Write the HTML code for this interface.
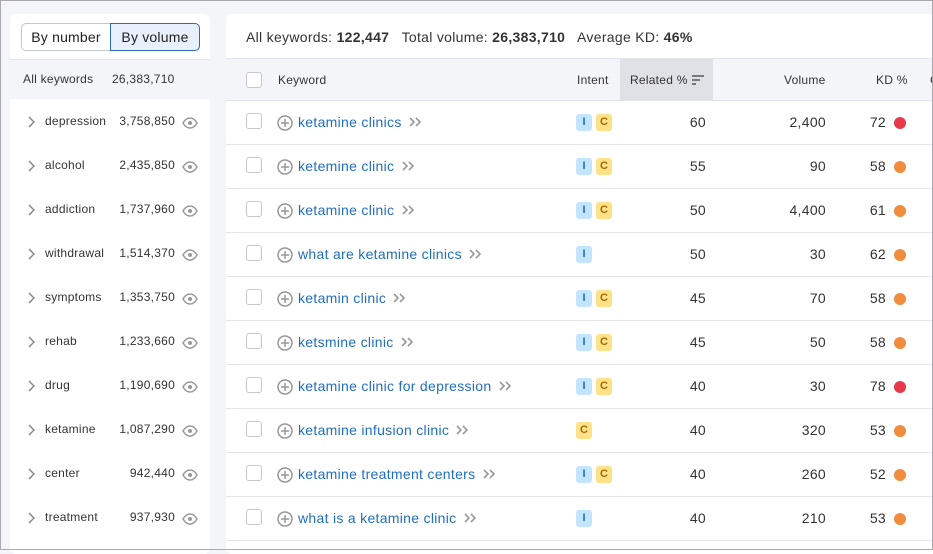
<!DOCTYPE html>
<html><head><meta charset="utf-8"><style>
*{box-sizing:border-box;margin:0;padding:0}
body{width:933px;height:550px;background:#f4f5f9;font-family:"Liberation Sans",sans-serif;color:#333;position:relative;overflow:hidden}
.fr{position:absolute;left:0;top:0;width:933px;height:550px;border:1px solid #a8a8ad;z-index:10;pointer-events:none}
.a{position:absolute;white-space:nowrap}
.lp{position:absolute;left:10px;top:14px;width:200px;height:540px;background:#fff;border-radius:6px}
.rp{position:absolute;left:226px;top:14px;width:712px;height:540px;background:#fff;border-radius:6px}
.seg{position:absolute;top:9px;height:28px;border:1px solid #c4c7cf;font-size:14px;line-height:26px;text-align:center;color:#222;letter-spacing:0.2px}
.cb{position:absolute;width:16px;height:16px;border:1px solid #c4c7cf;border-radius:3px;background:#fff}
.lnk{color:#1f6fbf;font-size:14px;letter-spacing:0.3px}
.bd{display:inline-block;width:16px;height:17px;border-radius:3px;font-size:11px;font-weight:bold;line-height:17px;text-align:center}
.bi{background:#c4e5fe;color:#1f6fbf}.bc{background:#ffe18a;color:#a16b00}
.num{font-size:14px;text-align:right;color:#333;letter-spacing:0.3px}
.dot{position:absolute;width:12px;height:12px;border-radius:50%}
.sb{font-size:12px;color:#333;letter-spacing:0.25px}
</style></head><body>
<div class="fr"></div>
<div class="lp">
<div class="seg" style="left:11px;width:90px;border-radius:5px 0 0 5px">By number</div>
<div class="seg" style="left:100px;width:90px;border-radius:0 5px 5px 0;background:#e8f1fb;border-color:#2b6cb8">By volume</div>
<div class="a" style="left:0;top:45px;width:200px;height:40px;background:#f4f5f9;border-top:1px solid #e4e6eb"></div>
<div class="a sb" style="left:13px;top:58px">All keywords</div>
<div class="a sb" style="left:102px;top:58px">26,383,710</div>
</div>
<div class="rp">
<div class="a" style="left:20px;top:15px;font-size:14px;color:#333;letter-spacing:0.3px">All keywords: <b>122,447</b>&nbsp;&nbsp; Total volume: <b>26,383,710</b>&nbsp;&nbsp; Average KD: <b>46%</b></div>
<div class="a" style="left:0;top:44px;width:712px;height:43px;background:#f4f5f9;border-top:1px solid #e4e6eb;border-bottom:1px solid #e4e6eb"></div>
<div class="a" style="left:394px;top:45px;width:93px;height:41px;background:#e0e1e7"></div>
<div class="cb" style="left:20px;top:58px"></div>
<div class="a sb" style="left:52px;top:59px">Keyword</div>
<div class="a sb" style="left:351px;top:59px">Intent</div>
<div class="a sb" style="left:404px;top:59px">Related %</div>
<svg class="a" style="left:465px;top:59px" width="14" height="14"><path d="M1 3h12M1 7h8M1 11h4" stroke="#555" stroke-width="1.5"/></svg>
<div class="a sb" style="left:558px;top:59px">Volume</div>
<div class="a sb" style="left:650px;top:59px">KD %</div>
<div class="a sb" style="left:704px;top:59px">C</div>
</div>
<div id="rows"></div>
<script>
var L=[["depression","3,758,850"],["alcohol","2,435,850"],["addiction","1,737,960"],["withdrawal","1,514,370"],["symptoms","1,353,750"],["rehab","1,233,660"],["drug","1,190,690"],["ketamine","1,087,290"],["center","942,440"],["treatment","937,930"]];
var R=[["ketamine clinics","IC",60,"2,400",72,"#e8394b"],["ketemine clinic","IC",55,"90",58,"#f08c3c"],["ketamine clinic","IC",50,"4,400",61,"#f08c3c"],["what are ketamine clinics","I",50,"30",62,"#f08c3c"],["ketamin clinic","IC",45,"70",58,"#f08c3c"],["ketsmine clinic","IC",45,"50",58,"#f08c3c"],["ketamine clinic for depression","IC",40,"30",78,"#e8394b"],["ketamine infusion clinic","C",40,"320",53,"#f08c3c"],["ketamine treatment centers","IC",40,"260",52,"#f08c3c"],["what is a ketamine clinic","I",40,"210",53,"#f08c3c"]];
var h="";
var eye='<svg width="16" height="12" viewBox="0 0 16 12"><path d="M1 6C3 2.5 5.5 1 8 1s5 1.5 7 5c-2 3.5-4.5 5-7 5S3 9.5 1 6z" fill="none" stroke="#999" stroke-width="1.4"/><circle cx="8" cy="6" r="2" fill="#999"/></svg>';
L.forEach(function(r,i){var y=122+i*44;
h+='<svg class="a" style="left:27px;top:'+(y-6)+'px" width="8" height="12"><path d="M2 1l5 5-5 5" fill="none" stroke="#888" stroke-width="1.5"/></svg>';
h+='<div class="a sb" style="left:45px;top:'+(y-8)+'px">'+r[0]+'</div>';
h+='<div class="a sb" style="left:90px;width:85px;text-align:right;top:'+(y-8)+'px">'+r[1]+'</div>';
h+='<div class="a" style="left:182px;top:'+(y-6)+'px">'+eye+'</div>';});
R.forEach(function(r,i){var y=123+i*44;
h+='<div class="a" style="left:226px;top:'+(y+21)+'px;width:707px;height:1px;background:#e4e6eb"></div>';
h+='<div class="cb" style="left:246px;top:'+(y-10)+'px"></div>';
h+='<svg class="a" style="left:277px;top:'+(y-8)+'px" width="16" height="16"><circle cx="8" cy="8" r="7" fill="none" stroke="#999" stroke-width="1.5"/><path d="M8 4v8M4 8h8" stroke="#999" stroke-width="1.5"/></svg>';
h+='<div class="a lnk" style="left:298px;top:'+(y-9)+'px">'+r[0]+' <svg width="14" height="10" style="margin-left:2px"><path d="M2 1l4 4-4 4M8 1l4 4-4 4" fill="none" stroke="#999" stroke-width="1.6"/></svg></div>';
var b='';for(var c of r[1]){b+='<span class="bd '+(c=="I"?"bi":"bc")+'" style="margin-right:4px">'+c+'</span>';}
h+='<div class="a" style="left:576px;top:'+(y-9)+'px;height:17px;display:flex">'+b+'</div>';
h+='<div class="a num" style="left:640px;width:66px;top:'+(y-9)+'px">'+r[2]+'</div>';
h+='<div class="a num" style="left:740px;width:86px;top:'+(y-9)+'px">'+r[3]+'</div>';
h+='<div class="a num" style="left:850px;width:36px;top:'+(y-9)+'px">'+r[4]+'</div>';
h+='<div class="dot" style="left:894px;top:'+(y-6)+'px;background:'+r[5]+'"></div>';});
document.getElementById("rows").innerHTML=h;
</script>
</body></html>
